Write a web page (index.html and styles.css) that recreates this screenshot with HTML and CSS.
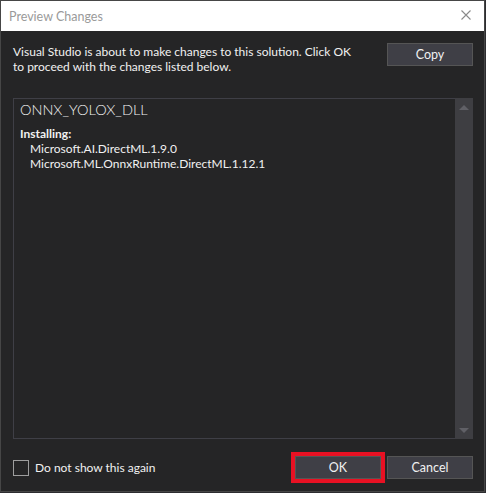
FILE: index.html
```html
<!DOCTYPE html>
<html>
<head>
<meta charset="utf-8">
<link rel="stylesheet" href="styles.css">
</head>
<body>
<div class="window">
  <div class="titlebar">
    <span class="title">Preview Changes</span>
    <svg class="close" width="10" height="10" viewBox="0 0 10 10"><path d="M0.5 0.5 L9.5 9.5 M9.5 0.5 L0.5 9.5" stroke="#8a8a8a" stroke-width="1.1" fill="none"/></svg>
  </div>
  <div class="content">
    <div class="top">
      <p class="desc">Visual Studio is about to make changes to this solution. Click OK to proceed with the changes listed below.</p>
      <button class="btn">Copy</button>
    </div>
    <div class="listbox">
      <div class="list-body">
        <div class="project">ONNX_YOLOX_DLL</div>
        <div class="section">Installing:</div>
        <div class="item">Microsoft.AI.DirectML.1.9.0</div>
        <div class="item">Microsoft.ML.OnnxRuntime.DirectML.1.12.1</div>
      </div>
      <div class="scrollbar">
        <span class="arrow up"></span>
        <span class="arrow down"></span>
      </div>
    </div>
    <div class="footer">
      <label class="check"><span class="box"></span><span>Do not show this again</span></label>
      <div class="buttons">
        <button class="btn highlight">OK</button>
        <button class="btn">Cancel</button>
      </div>
    </div>
  </div>
</div>
</body>
</html>
```

FILE: styles.css
```css
* { box-sizing: border-box; }
html, body {
  margin: 0;
  padding: 0;
  background: #2d2d30;
}
body {
  font-family: Lato, "Open Sans", sans-serif;
  font-size: 12px;
  color: #f1f1f1;
  width: 486px;
  height: 493px;
  overflow: hidden;
}
.window {
  width: 485px;
  height: 492px;
  border: 1px solid #464646;
  display: flex;
  flex-direction: column;
  background: #252526;
}
.titlebar {
  height: 30px;
  background: #ffffff;
  display: flex;
  align-items: center;
  justify-content: space-between;
  padding: 0 13px 0 8px;
}
.title {
  color: #9a9a9a;
  font-size: 12.5px;
}
.close { display: block; margin-top: -2px; }
.content {
  flex: 1;
  display: flex;
  flex-direction: column;
  padding: 12px 11px 12px 12px;
  background: #252526;
}
.top {
  display: flex;
  justify-content: space-between;
  align-items: flex-start;
}
.desc {
  margin: 0;
  width: 345px;
  line-height: 15px;
  padding-top: 1px;
}
.btn {
  width: 86px;
  height: 23px;
  background: #3f3f46;
  border: 1px solid #555555;
  color: #f1f1f1;
  font-family: inherit;
  font-size: 12.5px;
  padding: 0;
}
.listbox {
  margin-top: 24px;
  height: 341px;
  border: 1px solid #3f3f46;
  border-right: none;
  display: flex;
}
.list-body {
  flex: 1;
  padding: 1px 6px;
}
.project {
  font-size: 14.5px;
  line-height: 20px;
  font-weight: 300;
}
.section {
  font-weight: bold;
  margin-top: 6px;
  line-height: 15px;
}
.item {
  padding-left: 10px;
  line-height: 15px;
}
.scrollbar {
  width: 18px;
  margin-top: -1px;
  margin-bottom: -1px;
  background: #3e3e42;
  display: flex;
  flex-direction: column;
  justify-content: space-between;
  align-items: center;
  padding: 7px 0 6px;
}
.arrow {
  width: 0;
  height: 0;
  border-left: 5px solid transparent;
  border-right: 5px solid transparent;
}
.arrow.up { border-bottom: 5px solid #606066; }
.arrow.down { border-top: 5px solid #606066; }
.footer {
  margin-top: auto;
  display: flex;
  justify-content: space-between;
  align-items: center;
}
.check {
  display: flex;
  align-items: center;
  gap: 6px;
}
.box {
  width: 16px;
  height: 16px;
  border: 1px solid #9e9e9e;
}
.buttons {
  display: flex;
  gap: 6px;
}
.highlight {
  outline: 4px solid #e81123;
}
```
